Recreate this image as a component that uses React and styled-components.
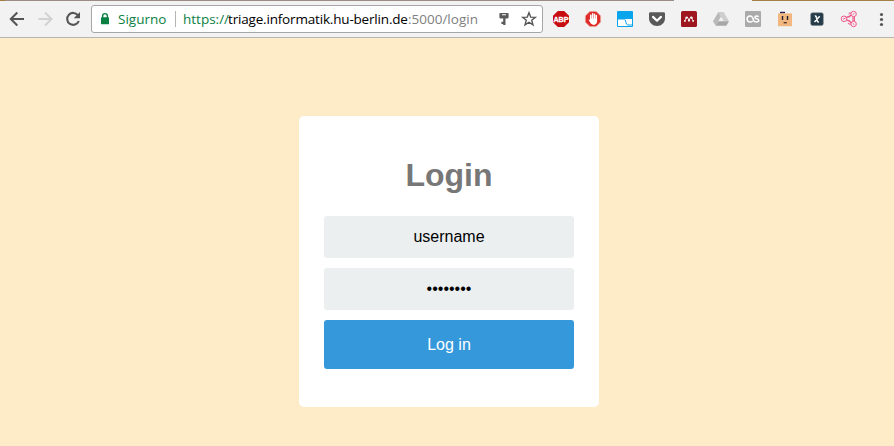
import React from "react";
import styled, { createGlobalStyle } from "styled-components";

const GlobalStyle = createGlobalStyle`
  *, *::before, *::after { box-sizing: border-box; }
  html, body { margin: 0; padding: 0; background: #feebc8; overflow: hidden; }
`;

const Page = styled.div`
  display: flex;
  flex-direction: column;
  width: 894px;
  height: 446px;
  background: #feebc8;
  font-family: "Liberation Sans", Arial, sans-serif;
`;

const TabEdge = styled.div`
  display: grid;
  grid-template-columns: 5px 669px 78px 1fr;
  height: 1px;
  flex: none;
`;

const EdgePiece = styled.div`
  background: ${(p) => p.$color};
`;

const Toolbar = styled.header`
  display: flex;
  align-items: center;
  flex: none;
  height: 37px;
  padding: 0 5px 0 7px;
  background: #f2f2f2;
  border-bottom: 1px solid #b6b4b6;
`;

const NavButtons = styled.nav`
  display: flex;
  gap: 8px;
  margin-right: 8px;
`;

const Icon = styled.svg`
  display: block;
  flex: none;
  width: ${(p) => p.$size || 16}px;
  height: ${(p) => p.$size || 16}px;
  overflow: visible;
`;

const Omnibox = styled.div`
  display: flex;
  align-items: center;
  flex: none;
  width: 452px;
  height: 28px;
  padding: 0 5px 0 6px;
  background: #fff;
  border: 1px solid #a6a6a6;
  border-radius: 3px;
  font: 13.5px/20px "Open Sans", "Noto Sans", sans-serif;
  white-space: nowrap;
`;

const Secure = styled.span`
  flex: none;
  width: 62px;
  padding-left: 5px;
  color: #0b8043;
`;

const Divider = styled.span`
  flex: none;
  width: 1px;
  height: 16px;
  margin-right: 7px;
  background: #b4b4b4;
`;

const UrlPart = styled.span`
  flex: none;
  width: ${(p) => p.$width}px;
  color: ${(p) => p.$color};
  letter-spacing: ${(p) => p.$spacing}px;
`;

const OmniActions = styled.div`
  display: flex;
  gap: 9px;
  margin-left: auto;
`;

const Extensions = styled.div`
  display: flex;
  gap: 16px;
  margin-left: 10px;
`;

const Main = styled.main`
  display: flex;
  justify-content: center;
  padding: 78px 0 0 4px;
`;

const Card = styled.form`
  display: flex;
  flex-direction: column;
  gap: 10px;
  width: 300px;
  height: 291px;
  padding: 41px 25px 38px;
  background: #fff;
  border-radius: 5px;
`;

const Title = styled.h1`
  margin: 0 0 12px;
  color: #777;
  font-size: 32px;
  line-height: 37px;
  font-weight: bold;
  text-align: center;
`;

const Field = styled.input`
  width: 250px;
  height: 42px;
  padding: 0 0 ${(p) => (p.type === "password" ? 1 : 0)}px;
  border: 0;
  border-radius: 3px;
  outline: 0;
  background: #ebeff0;
  color: #000;
  font: 16px "Liberation Sans", Arial, sans-serif;
  text-align: center;
`;

const Submit = styled.button`
  width: 250px;
  height: 49px;
  padding: 0;
  border: 0;
  border-radius: 3px;
  background: #3498db;
  color: #fff;
  font: 16px "Liberation Sans", Arial, sans-serif;
`;

const Arrow = ({ color, flip }) => (
  <Icon $size={20} viewBox="0 0 20 20" fill="none" stroke={color} strokeWidth="2">
    <path d={flip ? "M3.5 10H16.5M10 3.5L16.5 10L10 16.5" : "M17 10H4M10.3 3.5L3.8 10L10.3 16.5"} />
  </Icon>
);

const Reload = () => (
  <Icon $size={20} viewBox="0 0 20 20">
    <path d="M15.2 6.6A6 6 0 1 0 15.8 12" fill="none" stroke="#555" strokeWidth="2.1" />
    <path d="M17 3V9.3H10.7Z" fill="#555" />
  </Icon>
);

const Lock = () => (
  <Icon $size={15} viewBox="0 0 15 15">
    <path d="M4.6 6V4a2.4 2.4 0 0 1 4.8 0V6" fill="none" stroke="#0b8043" strokeWidth="1.4" />
    <rect x="3" y="5.3" width="8" height="7" rx="0.6" fill="#0b8043" />
  </Icon>
);

const Key = () => (
  <Icon viewBox="0 0 16 16">
    <path fill="#5a5a5a" fillRule="evenodd" d="M4.2 2h7.6q.8 0 .8.8v3.4q0 1.3-1.3 1.3H9.5V14H7.2v-1.1H5.4v-2.2h1.8V7.5H4.7q-1.3 0-1.3-1.3V2.8q0-.8.8-.8ZM6 3.3v1h4v-1Z" />
  </Icon>
);

const Star = () => (
  <Icon viewBox="0 0 16 16">
    <path d="M8 1.7L9.7 6.1L14.4 6.3L10.7 9.3L12 13.9L8 11.3L4 13.9L5.3 9.3L1.6 6.3L6.3 6.1Z" fill="none" stroke="#555" strokeWidth="1.35" />
  </Icon>
);

const IconText = styled.text`
  font-family: "Liberation Sans", Arial, sans-serif;
  font-weight: 700;
  text-anchor: middle;
`;

const AdBlockPlus = () => (
  <Icon viewBox="0 0 16 16">
    <path d="M4.8 0h6.4L16 4.8v6.4L11.2 16H4.8L0 11.2V4.8Z" fill="#c70d12" />
    <IconText x="8" y="10.8" fontSize="7.2" fill="#fff" stroke="#fff" strokeWidth=".3">ABP</IconText>
  </Icon>
);

const AdBlock = () => (
  <Icon viewBox="0 0 16 16">
    <path d="M4.9 .4h6.2l4.5 4.5v6.2l-4.5 4.5H4.9L.4 11.1V4.9Z" fill="#df2b27" stroke="#efa19b" strokeWidth=".8" />
    <path d="M5.7 9V4.2M7.6 8V2.8M9.5 8V3.2M11.3 9V4.6" stroke="#fff" strokeWidth="1.5" strokeLinecap="round" />
    <path d="M5 7.5h7.1v2.6c0 2.3-1.3 3.8-3.3 3.8-1.9 0-3-1-3.9-2.8L3.6 8.9q.7-.8 1.4.2Z" fill="#fff" />
  </Icon>
);

const WindowCurve = () => (
  <Icon viewBox="0 0 16 16">
    <rect width="16" height="16" rx="1" fill="#08a5ec" />
    <path d="M1 8H15V15H1Z" fill="#fff" />
    <path d="M1 8H7.2Q8.4 8.3 8.8 11T10.8 14H15" fill="none" stroke="#08a5ec" strokeWidth="1" />
  </Icon>
);

const Pocket = () => (
  <Icon viewBox="0 0 16 16">
    <path d="M1.2 1.3h13.6Q16 1.3 16 2.5v4.8C16 12 12.3 15 8 15S0 12 0 7.3V2.5Q0 1.3 1.2 1.3Z" fill="#595959" />
    <path d="M4 5.9l4 3.8 4-3.8" fill="none" stroke="#fff" strokeWidth="2.2" strokeLinecap="round" strokeLinejoin="round" />
  </Icon>
);

const Mendeley = () => (
  <Icon viewBox="0 0 16 16">
    <rect width="16" height="16" rx="1.6" fill="#9d1620" />
    <circle cx="5.7" cy="6.6" r="1.2" fill="#fff" />
    <circle cx="10.3" cy="6.6" r="1.2" fill="#fff" />
    <path d="M5 6.6Q4.8 9 3.5 10M6.3 6.6Q7.8 7.4 8 9.5 8.2 7.4 9.7 6.6M11 6.6Q11.2 9 12.5 10" fill="none" stroke="#fff" strokeWidth=".9" />
    <circle cx="3.9" cy="9.9" r=".9" fill="#fff" />
    <circle cx="8" cy="9.6" r="1.1" fill="#fff" />
    <circle cx="12.1" cy="9.9" r=".9" fill="#fff" />
  </Icon>
);

const Drive = () => (
  <Icon viewBox="0 0 16 16">
    <path d="M5.4 1h5.2L16 10.2H10.8Z" fill="#cecece" />
    <path d="M5.4 1L8 5.6 2.7 14.8 0 10.2Z" fill="#b9b9b9" />
    <path d="M5.3 10.2H16l-2.7 4.6H2.7Z" fill="#a7a7a7" />
  </Icon>
);

const LastScrobbler = () => (
  <Icon viewBox="0 0 16 16">
    <rect width="16" height="16" rx="1" fill="#aaa" />
    <path d="M7.8 9.9Q6.8 11 5.1 11 2.1 11 2.1 8T5 5q1.9 0 2.6 1.8l1 2.5Q9.3 11 11.3 11q2.5 0 2.5-1.7 0-1.2-2.1-1.6-1.8-.3-1.8-1.3Q9.9 5 11.7 5q1.2 0 1.9.9" fill="none" stroke="#fff" strokeWidth="1.5" />
  </Icon>
);

const BoxFace = () => (
  <Icon viewBox="0 0 16 16">
    <path d="M3 1.6h5" stroke="#272052" strokeWidth="1.6" fill="none" />
    <path d="M1 2.4H15V15.2H1Z" fill="#f1b77f" />
    <path d="M5.5 5v4M10.5 5v4" stroke="#22202a" strokeWidth="1.4" />
    <path d="M6.6 11.7h3.2" fill="none" stroke="#47302a" strokeWidth="1.3" />
  </Icon>
);

const XBadge = () => (
  <Icon viewBox="0 0 16 16">
    <rect x="1.7" y="1.8" width="12.6" height="12.6" rx="1.7" fill="#263d49" stroke="#6d7c84" strokeWidth=".5" />
    <path d="M5.8 5.1Q7 4.8 7.3 6.2L8.2 9.8Q8.5 11.1 9.9 10.9M10.7 5.3L5.5 10.9" fill="none" stroke="#fff" strokeWidth="1.5" />
  </Icon>
);

const Molecule = () => (
  <Icon viewBox="0 0 16 16" fill="none" stroke="#f05a8b" strokeWidth="1">
    <circle cx="3" cy="7.8" r="2.8" />
    <circle cx="12.6" cy="3" r="2.7" />
    <circle cx="12.6" cy="13" r="2.7" />
    <path d="M5.5 6.2Q8.4 6.2 10 4M5.6 9Q8.6 9.3 10.2 11.8" strokeWidth="1.5" />
    <path d="M12 5.7V10.3M13.4 5.7V10.3" strokeWidth="1.1" />
    <path d="M10 2.2Q8.2.9 7.8 3.3M7.2 11.7Q7.3 13.8 9.9 13.2" />
    <path d="M2 8.2L4.6 7M11.7 3.8L13.4 2.2M11.7 12.2L13.4 13.8" />
  </Icon>
);

const Menu = () => (
  <Icon viewBox="0 0 16 16" fill="#555">
    <circle cx="8.5" cy="3.5" r="1.6" />
    <circle cx="8.5" cy="8.5" r="1.6" />
    <circle cx="8.5" cy="13.5" r="1.6" />
  </Icon>
);

export default function App() {
  return (
    <Page>
      <GlobalStyle />
      <TabEdge>
        <EdgePiece $color="#a57d3f" />
        <EdgePiece $color="#9b8d83" />
        <EdgePiece $color="#f2f2f2" />
        <EdgePiece $color="#a68147" />
      </TabEdge>
      <Toolbar>
        <NavButtons>
          <Arrow color="#555" />
          <Arrow color="#d2d2d2" flip />
          <Reload />
        </NavButtons>
        <Omnibox>
          <Lock />
          <Secure>Sigurno</Secure>
          <Divider />
          <UrlPart $width={45} $color="#0b8043" $spacing={0}>https://</UrlPart>
          <UrlPart $width={180} $color="#000" $spacing={-0.18}>triage.informatik.hu-berlin.de</UrlPart>
          <UrlPart $width={72} $color="#808080" $spacing={0}>:5000/login</UrlPart>
          <OmniActions>
            <Key />
            <Star />
          </OmniActions>
        </Omnibox>
        <Extensions>
          <AdBlockPlus />
          <AdBlock />
          <WindowCurve />
          <Pocket />
          <Mendeley />
          <Drive />
          <LastScrobbler />
          <BoxFace />
          <XBadge />
          <Molecule />
          <Menu />
        </Extensions>
      </Toolbar>
      <Main>
        <Card onSubmit={(e) => e.preventDefault()}>
          <Title>Login</Title>
          <Field type="text" defaultValue="username" aria-label="username" />
          <Field type="password" defaultValue="password" aria-label="password" />
          <Submit type="submit">Log in</Submit>
        </Card>
      </Main>
    </Page>
  );
}
